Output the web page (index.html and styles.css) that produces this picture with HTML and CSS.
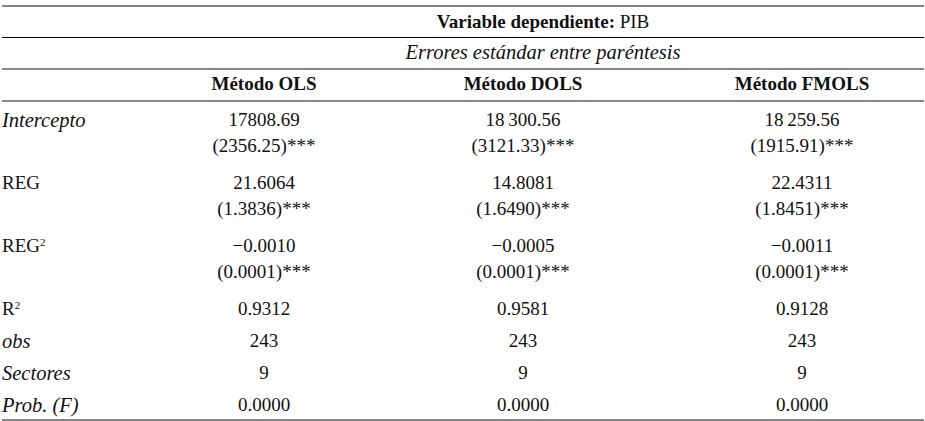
FILE: index.html
```html
<!DOCTYPE html>
<html lang="es">
<head>
<meta charset="utf-8">
<title>Resultados</title>
<link rel="stylesheet" href="styles.css">
</head>
<body>
<table class="results">
  <colgroup>
    <col class="c-label">
    <col class="c-ols">
    <col class="c-dols">
    <col class="c-fmols">
  </colgroup>
  <thead>
    <tr class="h1">
      <th></th>
      <th colspan="3"><b>Variable dependiente:</b> <span class="reg">PIB</span></th>
    </tr>
    <tr class="h2">
      <th></th>
      <th colspan="3" class="it">Errores estándar entre paréntesis</th>
    </tr>
    <tr class="h3">
      <th></th>
      <th>Método OLS</th>
      <th>Método DOLS</th>
      <th>Método FMOLS</th>
    </tr>
  </thead>
  <tbody>
    <tr class="multi">
      <td class="label it">Intercepto</td>
      <td>17808.69<br>(2356.25)***</td>
      <td>18&#8201;300.56<br>(3121.33)***</td>
      <td>18&#8201;259.56<br>(1915.91)***</td>
    </tr>
    <tr class="multi">
      <td class="label">REG</td>
      <td>21.6064<br>(1.3836)***</td>
      <td>14.8081<br>(1.6490)***</td>
      <td>22.4311<br>(1.8451)***</td>
    </tr>
    <tr class="multi">
      <td class="label">REG<sup>2</sup></td>
      <td>−0.0010<br>(0.0001)***</td>
      <td>−0.0005<br>(0.0001)***</td>
      <td>−0.0011<br>(0.0001)***</td>
    </tr>
    <tr>
      <td class="label">R<sup>2</sup></td>
      <td>0.9312</td>
      <td>0.9581</td>
      <td>0.9128</td>
    </tr>
    <tr>
      <td class="label it">obs</td>
      <td>243</td>
      <td>243</td>
      <td>243</td>
    </tr>
    <tr>
      <td class="label it">Sectores</td>
      <td>9</td>
      <td>9</td>
      <td>9</td>
    </tr>
    <tr class="last">
      <td class="label it">Prob. (F)</td>
      <td>0.0000</td>
      <td>0.0000</td>
      <td>0.0000</td>
    </tr>
  </tbody>
</table>
</body>
</html>
```
FILE: styles.css
```css
html, body {
  margin: 0;
  padding: 0;
  background: #ffffff;
}

body {
  padding: 5px 1px 0 2px;
  font-family: "Liberation Serif", "Times New Roman", serif;
  font-size: 19px;
  color: #111111;
}

.results {
  width: 922px;
  border-collapse: separate;
  border-spacing: 0;
  table-layout: fixed;
  line-height: 26px;
}

.c-label { width: 160px; }
.c-ols { width: 204px; }
.c-dols { width: 314px; }
.c-fmols { width: 244px; }

.results th,
.results td {
  padding: 0;
  text-align: center;
  vertical-align: top;
}

.results th {
  font-weight: bold;
  padding: 2px 0 2px;
}

.h1 th {
  border-top: 2px solid #858585;
  border-bottom: 1px solid #000000;
  font-weight: normal;
}

.h1 b {
  font-weight: bold;
}

.h2 th {
  font-weight: normal;
  border-bottom: 2px solid #858585;
  padding: 1px 0 3px;
}

.h3 th {
  border-bottom: 2px solid #858585;
  padding: 1px 0 3px;
}

.it {
  font-style: italic;
  font-size: 20.5px;
}

.results td {
  padding: 5px 0 1px;
}

.results tr.multi td {
  padding: 5px 0 6px;
}

.results tr.last td {
  border-bottom: 2px solid #858585;
}

.results td.label {
  text-align: left;
}

sup {
  font-size: 11px;
  line-height: 0;
  vertical-align: 6px;
  font-style: normal;
}
```
